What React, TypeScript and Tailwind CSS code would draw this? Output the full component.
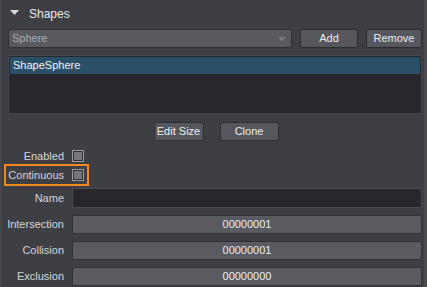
import React from "react";

// small grey square checkbox used by the editor
const Check = () => (
  <div className="w-[12px] h-[12px] border border-[#9c9da1] bg-[#2e2f33] p-[1px]">
    <div className="w-full h-full bg-[#76777c]" />
  </div>
);

const Button = ({ label, className = "" }: { label: string; className?: string }) => (
  <button
    className={`h-[19px] rounded-[2px] border border-[#2c2d31] bg-[#56575c] text-[11px] text-[#e8eef4] flex items-center justify-center ${className}`}
  >
    {label}
  </button>
);

const Field = ({ value }: { value: string }) => (
  <div className="h-[19px] rounded-[2px] border border-[#303135] bg-[#5a5b60] text-[11px] text-[#e8eef4] flex items-center justify-center">
    {value}
  </div>
);

const App = () => {
  return (
    <div
      className="w-[427px] h-[287px] bg-[#3e3f44] border-l-2 border-l-[#46474c] border-r-[3px] border-r-[#4a4b50] text-[#d4d6da] overflow-hidden"
      style={{ fontFamily: '"Liberation Sans", Arial, sans-serif' }}
    >
      {/* Header */}
      <div className="flex items-center h-[27px] pl-[8px] gap-[10px]">
        <svg width="9" height="6" viewBox="0 0 9 6" className="mt-[-1px]">
          <polygon points="0,0 9,0 4.5,5" fill="#d8d9dc" />
        </svg>
        <span className="text-[12px] text-[#e6e8eb]">Shapes</span>
      </div>

      {/* Combo + Add / Remove */}
      <div className="flex items-center pl-[6px] pr-[2px] gap-[8px] mt-[2px]">
        <div className="relative flex-1 h-[19px] rounded-[2px] border border-[#2f3034] bg-[#595a5f] flex items-center pl-[3px] text-[11px] text-[#a9abaf]">
          Sphere
          <svg width="8" height="5" viewBox="0 0 8 5" className="absolute right-[5px] top-[7px]">
            <polygon points="0,0 8,0 4,4" fill="#7c7d82" />
          </svg>
        </div>
        <Button label="Add" className="w-[58px]" />
        <Button label="Remove" className="w-[56px]" />
      </div>

      {/* List */}
      <div className="ml-[6px] mr-[2px] mt-[7px] h-[59px] bg-[#27282b] border border-[#47484d] pt-[1px] px-[1px]">
        <div className="h-[17px] bg-[#2a5068] text-[11px] text-[#f2f4f6] flex items-center pl-[3px]">
          ShapeSphere
        </div>
      </div>

      {/* Edit Size / Clone */}
      <div className="flex justify-center gap-[16px] mt-[8px] pl-[6px]">
        <Button label="Edit Size" className="w-[50px]" />
        <Button label="Clone" className="w-[59px]" />
      </div>

      {/* Checkboxes + fields */}
      <div className="mt-[7px] text-[11px]">
        <div className="flex items-center h-[16px] pr-[2px]">
          <div className="w-[62px] text-right">Enabled</div>
          <div className="ml-[8px]">
            <Check />
          </div>
        </div>
        <div className="ml-[2px] w-[85px] h-[22px] border-2 border-[#f08a1c] flex items-center">
          <div className="w-[58px] text-right">Continuous</div>
          <div className="ml-[8px]">
            <Check />
          </div>
        </div>

        <div className="grid grid-cols-[62px_1fr] gap-x-[8px] items-center mt-[2px] pr-[2px]">
          <div className="text-right">Name</div>
          <div className="h-[20px] bg-[#27282b] border border-[#4a4b50]" />
        </div>
        <div className="grid grid-cols-[62px_1fr] gap-x-[8px] gap-y-[7px] items-center mt-[7px] pr-[2px]">
          <div className="text-right">Intersection</div>
          <Field value="00000001" />
          <div className="text-right">Collision</div>
          <Field value="00000001" />
          <div className="text-right">Exclusion</div>
          <Field value="00000000" />
        </div>
      </div>
    </div>
  );
};

export default App;
